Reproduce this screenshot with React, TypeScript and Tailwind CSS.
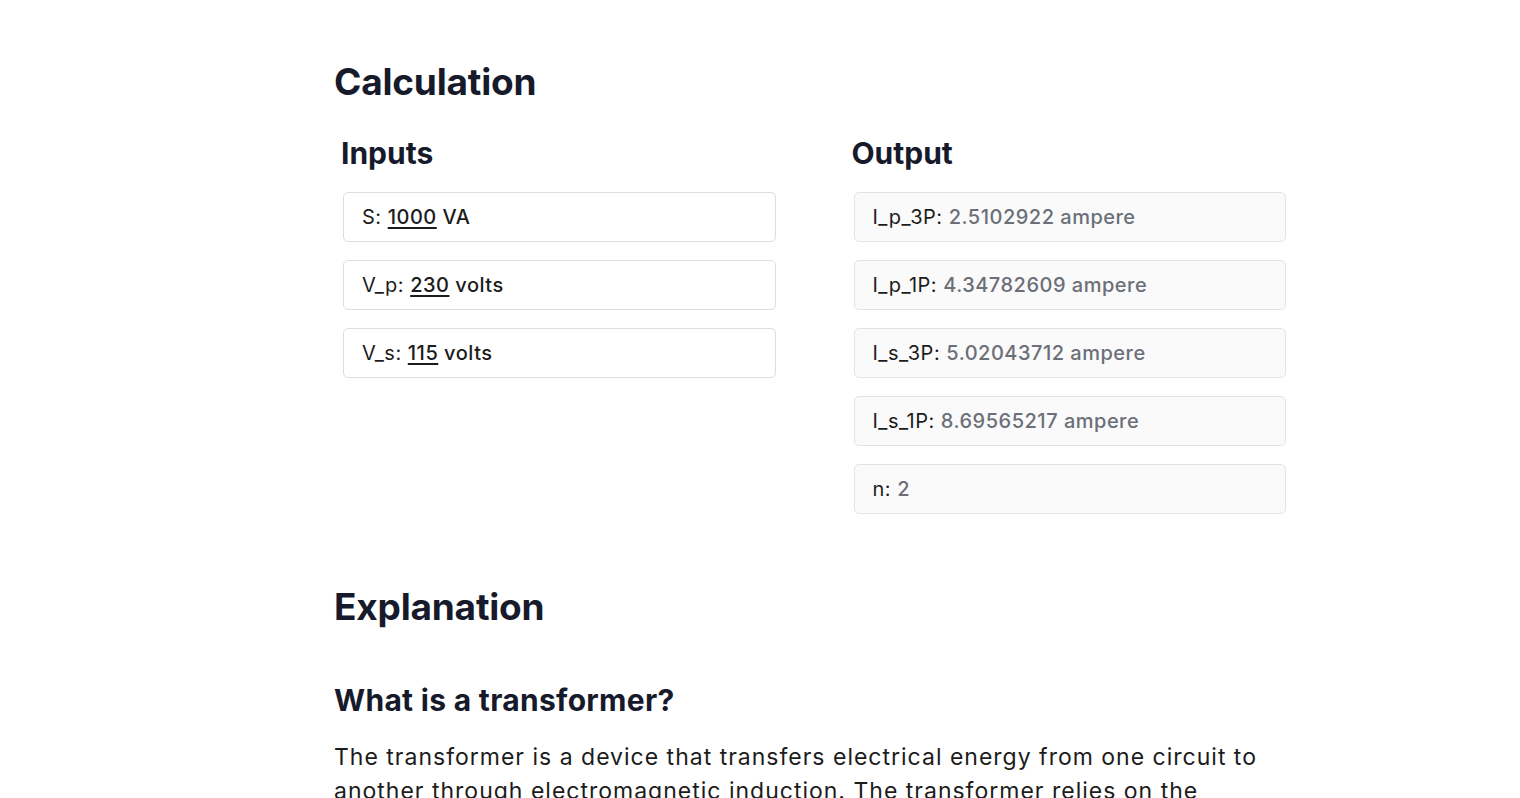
const inputs = [
  { name: 'S', value: '1000', unit: 'VA' },
  { name: 'V_p', value: '230', unit: 'volts' },
  { name: 'V_s', value: '115', unit: 'volts' },
];

const outputs = [
  { name: 'I_p_3P', value: '2.5102922 ampere' },
  { name: 'I_p_1P', value: '4.34782609 ampere' },
  { name: 'I_s_3P', value: '5.02043712 ampere' },
  { name: 'I_s_1P', value: '8.69565217 ampere' },
  { name: 'n', value: '2' },
];

const App = () => {
  return (
    <div className="min-h-screen bg-white font-['Inter',sans-serif] text-[#1c1c1c]">
      <main className="ml-[334px] w-[952px] pt-[58px] pb-20">
        <h2 className="text-[37px] leading-[48px] font-bold tracking-[-0.2px] text-[#161a2b]">Calculation</h2>

        <div className="mt-[29px] flex gap-[78px] pl-[9px]">
          <section className="w-[433px]">
            <h3 className="-ml-[2px] text-[30px] leading-[36px] font-bold text-[#161a2b]">Inputs</h3>
            <div className="mt-[21px] flex flex-col gap-[18px]">
              {inputs.map((item) => (
                <div
                  key={item.name}
                  className="flex h-[50px] items-center rounded-[5px] border border-[#dedede] bg-white px-[18px] text-[20px] tracking-[0.5px]"
                >
                  <span>{item.name}:&nbsp;</span>
                  <span className="font-medium underline decoration-[1.5px] underline-offset-[3px]">{item.value}</span>
                  <span className="font-medium">&nbsp;{item.unit}</span>
                </div>
              ))}
            </div>
          </section>

          <section className="w-[433px]">
            <h3 className="-ml-[2px] text-[30px] leading-[36px] font-bold text-[#161a2b]">Output</h3>
            <div className="mt-[21px] flex flex-col gap-[18px]">
              {outputs.map((item) => (
                <div
                  key={item.name}
                  className="flex h-[50px] items-center rounded-[5px] border border-[#e3e3e3] bg-[#fafafa] px-[18px] text-[20px] tracking-[0.5px]"
                >
                  <span>{item.name}:&nbsp;</span>
                  <span className="font-medium text-[#6b6f78]">{item.value}</span>
                </div>
              ))}
            </div>
          </section>
        </div>

        <h2 className="mt-[69px] text-[37px] leading-[48px] font-bold tracking-[-0.2px] text-[#161a2b]">Explanation</h2>

        <h3 className="mt-[51px] text-[30px] leading-[36px] font-bold tracking-[0.3px] text-[#161a2b]">What is a transformer?</h3>

        <p className="mt-[22px] text-[23px] leading-[34px] tracking-[1px] text-[#1c1c1c]">
          The transformer is a device that transfers electrical energy from one circuit to another through
          electromagnetic induction. The transformer relies on the principle of mutual induction between two or more
          windings that are coupled by a common magnetic flux.
        </p>
      </main>
    </div>
  );
};

export default App;
